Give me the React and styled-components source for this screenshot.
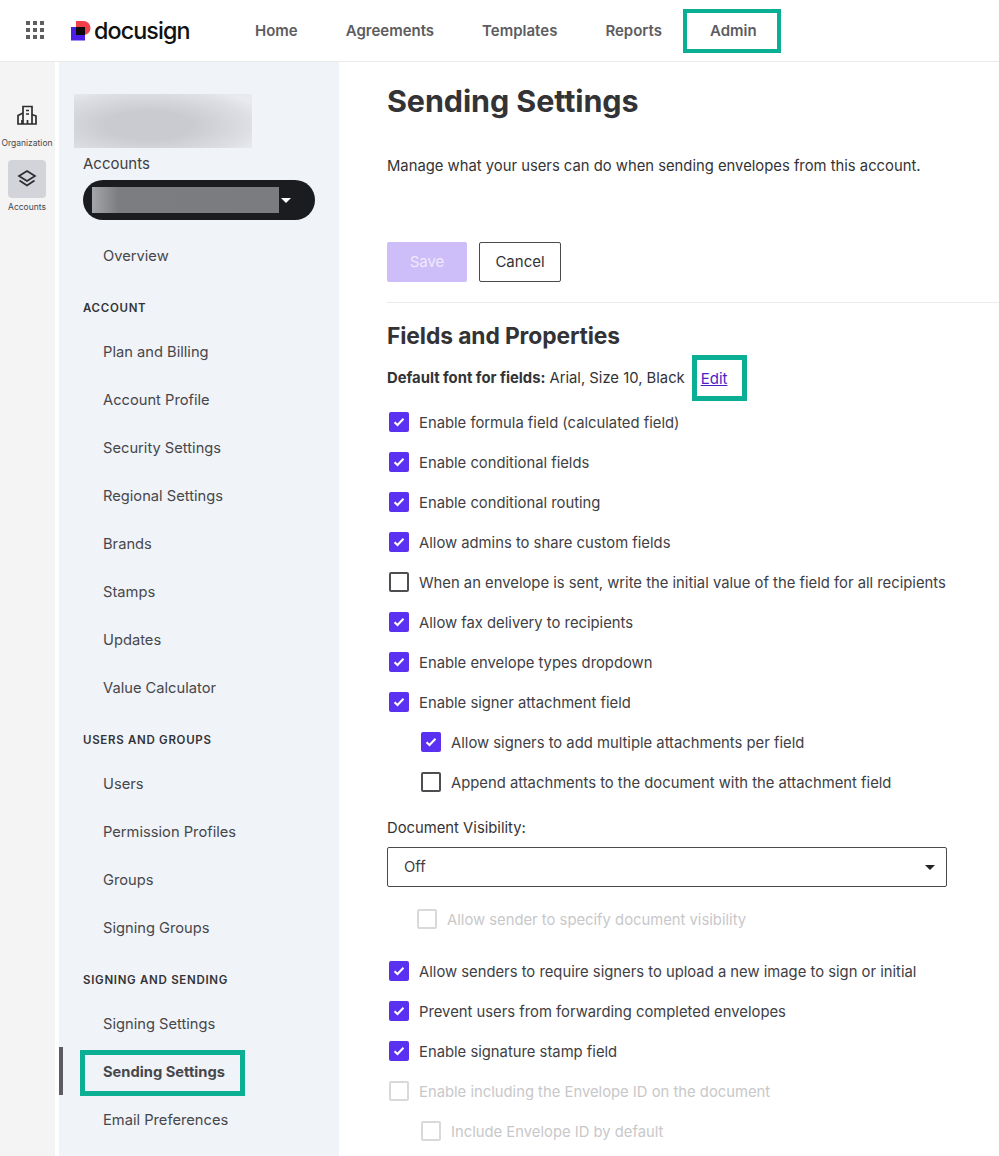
import React from "react";
import styled, { createGlobalStyle } from "styled-components";

const TEAL = "#0aaf94";
const PURPLE = "#5a31f0";

const GlobalStyle = createGlobalStyle`
  html, body {
    margin: 0;
    padding: 0;
    background: #fff;
    font-family: Inter, "Noto Sans", sans-serif;
    color: #2f2f33;
  }
`;

const Page = styled.div`
  width: 999px;
  height: 1156px;
  overflow: hidden;
  display: flex;
  flex-direction: column;
`;

const Header = styled.header`
  height: 61px;
  flex: none;
  display: flex;
  align-items: center;
  border-bottom: 1px solid #e9e9e9;
`;

const GridButton = styled.div`
  width: 18px;
  height: 18px;
  margin-left: 26px;
  margin-top: -1px;
  display: grid;
  grid-template-columns: repeat(3, 4px);
  grid-auto-rows: 4px;
  gap: 3px;
  span {
    background: #5f5f5f;
  }
`;

const Logo = styled.div`
  display: flex;
  align-items: center;
  margin-left: 27px;
  width: 184px;
  svg {
    flex: none;
  }
`;

const LogoText = styled.span`
  font-size: 23.3px;
  font-weight: 500;
  letter-spacing: -0.9px;
  color: #111;
  margin-left: 3px;
  line-height: 30px;
`;

const Nav = styled.nav`
  display: flex;
  align-items: center;
  gap: 48px;
`;

const NavItem = styled.a`
  position: relative;
  font-size: 15px;
  font-weight: 600;
  color: #5c5c60;
`;

const NavHighlight = styled.span`
  position: absolute;
  left: -27px;
  right: -24px;
  top: -12px;
  bottom: -13px;
  border: 4px solid ${TEAL};
`;

const Body = styled.div`
  flex: 1;
  display: flex;
  min-height: 0;
`;

const Rail = styled.aside`
  width: 55px;
  flex: none;
  box-sizing: border-box;
  background: #f4f4f4;
  margin-right: 4px;
  padding: 34px 1px 0 0;
  display: flex;
  flex-direction: column;
  align-items: center;
`;

const RailItem = styled.div`
  display: flex;
  flex-direction: column;
  align-items: center;
  font-size: 8.5px;
  line-height: 12px;
  color: #47474b;
  white-space: nowrap;
  margin-bottom: ${(p) => p.$mb || 0}px;
`;

const RailIcon = styled.div`
  width: 38px;
  height: 38px;
  border-radius: 4px;
  display: flex;
  align-items: center;
  justify-content: center;
  margin-bottom: 3px;
  background: ${(p) => (p.$active ? "#d2d4da" : "transparent")};
`;

const Sidebar = styled.aside`
  width: 280px;
  flex: none;
  background: #f0f3f8;
  padding-top: 32px;
  box-sizing: border-box;
`;

const BlurBanner = styled.div`
  width: 178px;
  height: 54px;
  margin-left: 15px;
  background: radial-gradient(ellipse 70% 75% at 42% 58%, #c9cbd0 35%, #dcdee3 80%, #e8eaee 100%);
`;

const AccountsLabel = styled.div`
  margin: 6px 0 0 24px;
  font-size: 15px;
  line-height: 20px;
  color: #404044;
`;

const AccountPill = styled.div`
  margin: 6px 0 0 24px;
  width: 232px;
  height: 40px;
  border-radius: 20px;
  background: #1b1c20;
  box-sizing: border-box;
  padding-left: 9px;
  display: flex;
  align-items: center;
`;

const PillBlur = styled.div`
  width: 187px;
  height: 26px;
  background: linear-gradient(90deg, #a5a6a9 0%, #7c7d80 14%, #7b7c7f 100%);
`;

const PillCaret = styled.div`
  margin-left: 2px;
  width: 0;
  height: 0;
  border-left: 5px solid transparent;
  border-right: 5px solid transparent;
  border-top: 5px solid #fff;
`;

const SideList = styled.div`
  margin-top: 11px;
`;

const SideItem = styled.div`
  position: relative;
  height: 48px;
  box-sizing: border-box;
  display: flex;
  align-items: center;
  padding: 2px 0 0 44px;
  font-size: 14.7px;
  color: #47474b;
  font-weight: ${(p) => (p.$active ? 700 : 400)};
`;

const ActiveBar = styled.span`
  position: absolute;
  left: 0;
  top: 0;
  width: 4px;
  height: 48px;
  background: #5c5c62;
`;

const ActiveBox = styled.span`
  position: absolute;
  left: 21px;
  top: 3px;
  width: 165px;
  height: 46px;
  box-sizing: border-box;
  border: 5px solid ${TEAL};
`;

const SideHeading = styled.div`
  height: 48px;
  box-sizing: border-box;
  padding: 10px 0 0 24px;
  display: flex;
  align-items: center;
  font-size: 11.5px;
  font-weight: 600;
  letter-spacing: 0.7px;
  color: #333337;
`;

const Main = styled.main`
  flex: 1;
  min-width: 0;
  padding-left: 48px;
`;

const Title = styled.h1`
  margin: 19px 0 0;
  font-size: 30.5px;
  line-height: 40px;
  font-weight: 700;
  letter-spacing: -0.1px;
  color: #333336;
`;

const Intro = styled.p`
  margin: 35px 0 0;
  font-size: 14.8px;
  line-height: 20px;
  color: #333336;
`;

const Actions = styled.div`
  margin-top: 66px;
  display: flex;
  gap: 12px;
  padding-bottom: 20px;
  border-bottom: 1px solid #ececec;
`;

const Button = styled.div`
  height: 40px;
  box-sizing: border-box;
  border-radius: 2px;
  padding-bottom: 1px;
  display: flex;
  align-items: center;
  justify-content: center;
  font-size: 15px;
  font-weight: 400;
  width: ${(p) => (p.$primary ? 80 : 82)}px;
  background: ${(p) => (p.$primary ? "#cdbdf8" : "#fff")};
  color: ${(p) => (p.$primary ? "#efeafd" : "#333336")};
  border: ${(p) => (p.$primary ? "none" : "1px solid #4a4a4e")};
`;

const SectionTitle = styled.h2`
  margin: 17px 0 0;
  font-size: 22.8px;
  line-height: 32px;
  font-weight: 700;
  letter-spacing: -0.1px;
  color: #333336;
`;

const FontRow = styled.div`
  margin-top: 14px;
  height: 24px;
  display: flex;
  align-items: center;
  font-size: 14.8px;
  color: #333336;
  strong {
    font-weight: 700;
    margin-right: 4px;
  }
`;

const EditBox = styled.span`
  margin-left: 7px;
  height: 46px;
  width: 55px;
  box-sizing: border-box;
  border: 5px solid ${TEAL};
  padding-left: 4px;
  display: flex;
  align-items: center;
`;

const EditLink = styled.a`
  color: #4a1fc4;
  text-decoration: underline;
  font-size: 15px;
`;

const CheckList = styled.div`
  margin-top: ${(p) => p.$mt || 0}px;
`;

const CheckRow = styled.div`
  height: 40px;
  display: flex;
  align-items: center;
  padding-left: ${(p) => p.$indent || 2}px;
  font-size: 14.8px;
  color: ${(p) => (p.$disabled ? "#c8c8ca" : "#404044")};
`;

const CheckLabel = styled.span`
  padding-top: 2px;
`;

const Box = styled.span`
  width: 20px;
  height: 20px;
  flex: none;
  box-sizing: border-box;
  border-radius: 2px;
  margin-right: 10px;
  display: flex;
  align-items: center;
  justify-content: center;
  background: ${(p) => (p.$checked ? PURPLE : "#fff")};
  border: ${(p) =>
    p.$checked ? "none" : p.$disabled ? "2px solid #d9d9db" : "2px solid #4e4e52"};
`;

const FieldLabel = styled.div`
  margin-top: 16px;
  font-size: 14.8px;
  line-height: 20px;
  color: #333336;
`;

const SelectBox = styled.div`
  margin-top: 9px;
  width: 560px;
  height: 40px;
  box-sizing: border-box;
  border: 1px solid #4a4a4e;
  border-radius: 2px;
  padding: 0 11px 0 16px;
  display: flex;
  align-items: center;
  justify-content: space-between;
  font-size: 14.8px;
  color: #404044;
`;

const SelectCaret = styled.span`
  width: 0;
  height: 0;
  border-left: 5px solid transparent;
  border-right: 5px solid transparent;
  border-top: 5px solid #222;
`;

const Check = () => (
  <svg width="12" height="10" viewBox="0 0 12 10" fill="none">
    <path d="M1.5 5.2 4.5 8 10.5 1.8" stroke="#fff" strokeWidth="2" />
  </svg>
);

const CheckItem = ({ label, checked, disabled, indent }) => (
  <CheckRow $indent={indent} $disabled={disabled}>
    <Box $checked={checked} $disabled={disabled}>
      {checked && <Check />}
    </Box>
    <CheckLabel>{label}</CheckLabel>
  </CheckRow>
);

const firstChecks = [
  { label: "Enable formula field (calculated field)", checked: true },
  { label: "Enable conditional fields", checked: true },
  { label: "Enable conditional routing", checked: true },
  { label: "Allow admins to share custom fields", checked: true },
  { label: "When an envelope is sent, write the initial value of the field for all recipients" },
  { label: "Allow fax delivery to recipients", checked: true },
  { label: "Enable envelope types dropdown", checked: true },
  { label: "Enable signer attachment field", checked: true },
  { label: "Allow signers to add multiple attachments per field", checked: true, indent: 34 },
  { label: "Append attachments to the document with the attachment field", indent: 34 },
];

const secondChecks = [
  { label: "Allow senders to require signers to upload a new image to sign or initial", checked: true },
  { label: "Prevent users from forwarding completed envelopes", checked: true },
  { label: "Enable signature stamp field", checked: true },
  { label: "Enable including the Envelope ID on the document", disabled: true },
  { label: "Include Envelope ID by default", disabled: true, indent: 34 },
];

const sideGroups = [
  { items: ["Overview"] },
  {
    heading: "ACCOUNT",
    items: [
      "Plan and Billing",
      "Account Profile",
      "Security Settings",
      "Regional Settings",
      "Brands",
      "Stamps",
      "Updates",
      "Value Calculator",
    ],
  },
  {
    heading: "USERS AND GROUPS",
    items: ["Users", "Permission Profiles", "Groups", "Signing Groups"],
  },
  {
    heading: "SIGNING AND SENDING",
    items: ["Signing Settings", "Sending Settings", "Email Preferences"],
  },
];

const LogoMark = () => (
  <svg width="20" height="20" viewBox="0 0 20 20">
    <path d="M5 0h7.5a7 7 0 0 1 0 14H5z" fill="#f2404b" />
    <rect x="0" y="6" width="14" height="13.5" fill="#4c1fe8" />
    <rect x="5" y="6" width="9" height="8" fill="#0a0a0a" />
  </svg>
);

const BuildingIcon = () => (
  <svg width="22" height="22" viewBox="0 0 22 22" fill="none" stroke="#2e2e32" strokeWidth="1.7">
    <path d="M7 20V2.5h9V20" />
    <path d="M7 9 2 11.5V20h18v-8l-4-1.5" />
    <path d="M10 6.5h3M10 10h3M6 16v4M11.5 16v4" />
  </svg>
);

const LayersIcon = () => (
  <svg width="20" height="20" viewBox="0 0 20 20" fill="none" stroke="#2c2c30" strokeWidth="1.7">
    <path d="M10 2 18 7 10 12 2 7z" />
    <path d="M2.5 11.5 10 16.5l7.5-5" />
  </svg>
);

const App = () => (
  <Page>
    <GlobalStyle />
    <Header>
      <GridButton>
        {Array.from({ length: 9 }).map((_, i) => (
          <span key={i} />
        ))}
      </GridButton>
      <Logo>
        <LogoMark />
        <LogoText>docusign</LogoText>
      </Logo>
      <Nav>
        <NavItem>Home</NavItem>
        <NavItem>Agreements</NavItem>
        <NavItem>Templates</NavItem>
        <NavItem>Reports</NavItem>
        <NavItem>
          Admin
          <NavHighlight />
        </NavItem>
      </Nav>
    </Header>
    <Body>
      <Rail>
        <RailItem $mb={11}>
          <RailIcon>
            <BuildingIcon />
          </RailIcon>
          Organization
        </RailItem>
        <RailItem>
          <RailIcon $active>
            <LayersIcon />
          </RailIcon>
          Accounts
        </RailItem>
      </Rail>
      <Sidebar>
        <BlurBanner />
        <AccountsLabel>Accounts</AccountsLabel>
        <AccountPill>
          <PillBlur />
          <PillCaret />
        </AccountPill>
        <SideList>
          {sideGroups.map((group) => (
            <div key={group.items[0]}>
              {group.heading && <SideHeading>{group.heading}</SideHeading>}
              {group.items.map((item) => {
                const active = item === "Sending Settings";
                return (
                  <SideItem key={item} $active={active}>
                    {active && <ActiveBar />}
                    {active && <ActiveBox />}
                    {item}
                  </SideItem>
                );
              })}
            </div>
          ))}
        </SideList>
      </Sidebar>
      <Main>
        <Title>Sending Settings</Title>
        <Intro>Manage what your users can do when sending envelopes from this account.</Intro>
        <Actions>
          <Button $primary>Save</Button>
          <Button>Cancel</Button>
        </Actions>
        <SectionTitle>Fields and Properties</SectionTitle>
        <FontRow>
          <strong>Default font for fields:</strong> Arial, Size 10, Black
          <EditBox>
            <EditLink>Edit</EditLink>
          </EditBox>
        </FontRow>
        <CheckList $mt={12}>
          {firstChecks.map((c) => (
            <CheckItem key={c.label} {...c} />
          ))}
        </CheckList>
        <FieldLabel>Document Visibility:</FieldLabel>
        <SelectBox>
          Off
          <SelectCaret />
        </SelectBox>
        <CheckList $mt={12}>
          <CheckItem label="Allow sender to specify document visibility" disabled indent={30} />
        </CheckList>
        <CheckList $mt={12}>
          {secondChecks.map((c) => (
            <CheckItem key={c.label} {...c} />
          ))}
        </CheckList>
      </Main>
    </Body>
  </Page>
);

export default App;
